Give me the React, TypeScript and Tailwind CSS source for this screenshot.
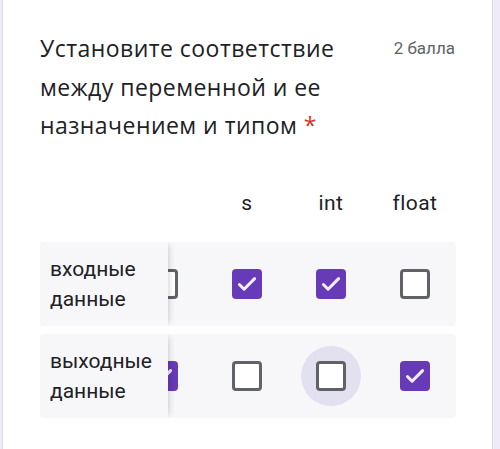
type Row = {
  label: string[];
  checked: boolean[];
  hover?: number;
};

const columns = ["", "s", "int", "float"];

const rows: Row[] = [
  { label: ["входные", "данные"], checked: [false, true, true, false] },
  { label: ["выходные", "данные"], checked: [true, false, false, true], hover: 2 },
];

function Checkbox({ checked, hover }: { checked: boolean; hover?: boolean }) {
  return (
    <div className="relative flex h-[60px] w-[60px] items-center justify-center">
      {hover && <div className="absolute inset-0 rounded-full bg-[#e3e0f0]" />}
      {checked ? (
        <div className="relative flex h-[30px] w-[30px] items-center justify-center rounded-[4px] bg-[#673ab7]">
          <svg width="26" height="26" viewBox="0 0 24 24" fill="none">
            <path d="M5 12.5l4.3 4.3L19 7" stroke="#f3eefb" strokeWidth="2.8" strokeLinecap="round" strokeLinejoin="round" />
          </svg>
        </div>
      ) : (
        <div className="relative h-[30px] w-[30px] rounded-[4px] border-[3px] border-[#5f6368] bg-white" />
      )}
    </div>
  );
}

export default function App() {
  return (
    <div className="h-[449px] w-[500px] overflow-hidden bg-[#f0ebf8]">
      <div className="ml-[2px] h-full w-[491px] border-x border-[#dadce0] bg-white px-[37px] pt-[29px]">
        <div className="flex justify-between">
          <div className="font-['Open_Sans',sans-serif] text-[23px] leading-[38.5px] tracking-[0.02em] text-[#202124]">
            <div>Установите соответствие</div>
            <div>между переменной и ее</div>
            <div>
              назначением и типом <span className="text-[#d93025]">*</span>
            </div>
          </div>
          <div className="font-['Roboto',sans-serif] text-[17px] leading-[38px] text-[#5f6368]">2 балла</div>
        </div>

        <div className="mt-[38px] w-[416px] font-['Roboto',sans-serif] text-[21px] text-[#202124]">
          <div className="flex h-[40px] items-center">
            <div className="relative z-10 h-full w-[128px] shrink-0 bg-white" />
            <div className="-ml-[47px] flex">
              {columns.map((c, i) => (
                <div key={i} className="w-[84px] text-center leading-[40px] tracking-[0.02em]">
                  {c}
                </div>
              ))}
            </div>
          </div>

          <div className="mt-[19px] flex flex-col gap-[8px]">
            {rows.map((r, i) => (
              <div key={i} className="flex h-[84px] items-center overflow-hidden rounded-[4px] bg-[#f7f7f9]">
                <div className="relative z-10 flex h-full w-[128px] shrink-0 flex-col justify-center bg-[#f7f7f9] pl-[10px] leading-[30px] shadow-[4px_0_6px_-3px_rgba(0,0,0,0.18)]">
                  {r.label.map((l) => (
                    <div key={l}>{l}</div>
                  ))}
                </div>
                <div className="-ml-[47px] flex">
                  {r.checked.map((c, j) => (
                    <div key={j} className="flex w-[84px] justify-center">
                      <Checkbox checked={c} hover={r.hover === j} />
                    </div>
                  ))}
                </div>
              </div>
            ))}
          </div>
        </div>
      </div>
    </div>
  );
}
